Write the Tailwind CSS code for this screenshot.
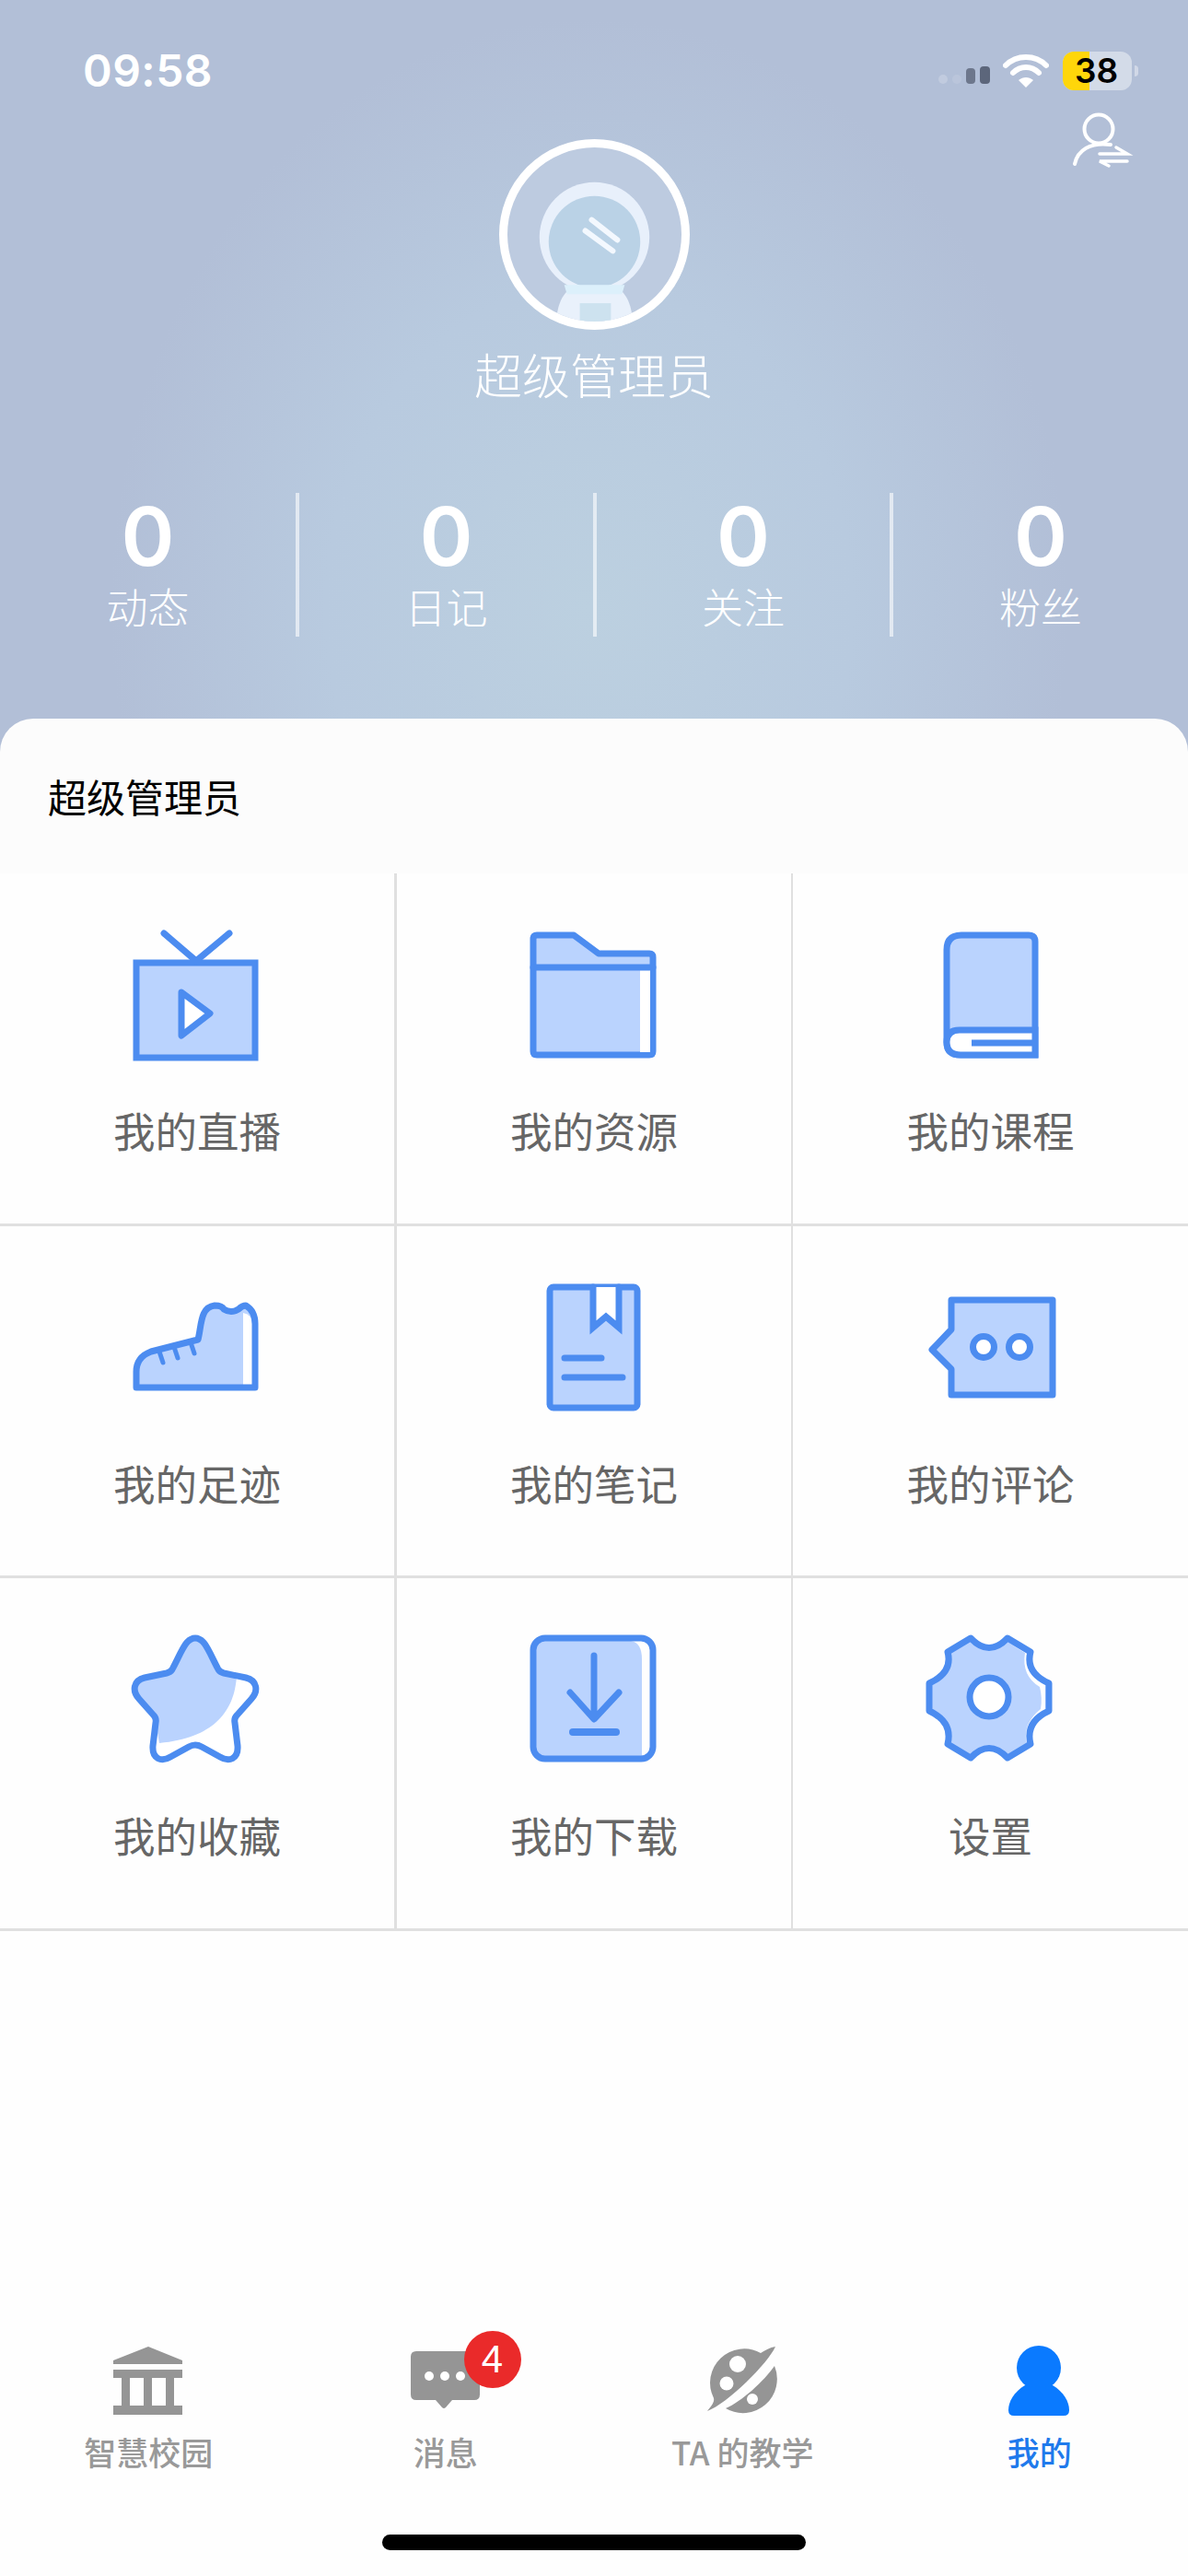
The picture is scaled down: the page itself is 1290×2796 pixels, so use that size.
<!DOCTYPE html>
<html lang="zh-CN">
<head>
<meta charset="utf-8">
<script src="https://cdn.jsdelivr.net/npm/@tailwindcss/browser@4"></script>
</head>
<body class="bg-[#fefefe]">
<div class="relative w-[1290px] h-[2796px] flex flex-col overflow-hidden bg-[#fefefe] font-['Noto_Sans_CJK_SC','Noto_Sans',sans-serif]">

  <!-- Header -->
  <header class="relative h-[816px] shrink-0 flex flex-col items-center text-white bg-[radial-gradient(ellipse_520px_640px_at_640px_660px,#bcd0e0_0%,#b8cadf_55%,#b2bfd7_100%)]">
    <!-- Status bar -->
    <div class="w-full h-[42px] mt-[56px] flex items-center justify-between pl-[90px] pr-[54px]">
      <span class="font-['Inter','Liberation_Sans',sans-serif] font-semibold text-[48px] leading-none tracking-[0.5px]">09:58</span>
      <div class="flex items-center">
        <div class="flex items-end gap-[5px] h-[20px] mt-[8px]">
          <span class="w-[10px] h-[10px] rounded-full bg-white/20"></span>
          <span class="w-[10px] h-[10px] rounded-full bg-white/10"></span>
          <span class="w-[10px] h-[17px] rounded-[4px] bg-[#6d778c]"></span>
          <span class="w-[11px] h-[19px] rounded-[4px] bg-[#5c667b]"></span>
        </div>
        <svg class="ml-[14px] mr-[15px]" width="50" height="38" viewBox="0 0 50 38" fill="none" stroke="#fff" stroke-linecap="round">
          <path d="M3 13 C15 1 35 1 47 13" stroke-width="6"/>
          <path d="M11 21 C19 13 31 13 39 21" stroke-width="6"/>
          <path d="M25 37 L17 29 C22 25 28 25 33 29 Z" fill="#fff" stroke="none"/>
        </svg>
        <div class="relative w-[75px] h-[42px] rounded-[12px] bg-[#d3dbe8] flex">
          <span class="w-[29px] h-full rounded-l-[12px] bg-[#ffd60a]"></span>
          <span class="absolute inset-0 flex items-center justify-center font-['Inter','Liberation_Sans',sans-serif] font-semibold text-[37px] leading-[42px] text-black pr-[2px]">38</span>
        </div>
        <span class="w-[4px] h-[12px] ml-[3px] rounded-r-full bg-white/40"></span>
      </div>
    </div>

    <!-- switch user -->
    <svg class="absolute left-[1160px] top-[118px]" width="72" height="66" viewBox="1160 118 72 66" fill="none" stroke="#fff" stroke-width="4" stroke-linecap="round">
      <circle cx="1193" cy="140" r="15.5"/>
      <path d="M1167 178 C1170 163 1184 154 1206 157"/>
      <path d="M1194 167 H1224 L1212 160" stroke-width="3.5"/>
      <path d="M1224 175 H1194 L1204 180" stroke-width="3.5"/>
    </svg>

    <!-- Avatar -->
    <div class="mt-[53px] w-[207px] h-[207px] rounded-full border-[9px] border-white overflow-hidden bg-[#bdcbe0] shrink-0">
      <svg width="189" height="189" viewBox="550 160 190 190">
        <path d="M603 352 C604 335 608 325 614 318 H676 C682 325 686 335 687 352 Z" fill="#e9f1fb"/>
        <circle cx="645" cy="258" r="60" fill="#e8f0fb"/>
        <circle cx="645" cy="263" r="50" fill="#bad2e6"/>
        <path d="M612 310 H678 L675 320 H615 Z" fill="#dcf0fb"/>
        <rect x="629" y="330" width="34" height="22" fill="#cde2ef"/>
        <path d="M642 239 L670 261 M635 251 L665 273" stroke="#f3f8fe" stroke-width="6" stroke-linecap="round"/>
      </svg>
    </div>

    <div class="mt-[18px] h-[60px] leading-[60px] text-[52px] font-light">超级管理员</div>

    <!-- Stats -->
    <div class="mt-[99px] w-full grid grid-cols-[325px_323px_322px_1fr] h-[156px]">
      <div class="flex flex-col items-center pt-[7px] border-r-[4px] border-white/60">
        <span class="font-['Inter','Liberation_Sans',sans-serif] font-semibold text-[88px] leading-[80px]">0</span>
        <span class="mt-[11px] text-[45px] leading-[50px] font-light">动态</span>
      </div>
      <div class="flex flex-col items-center pt-[7px] border-r-[4px] border-white/60">
        <span class="font-['Inter','Liberation_Sans',sans-serif] font-semibold text-[88px] leading-[80px]">0</span>
        <span class="mt-[11px] text-[45px] leading-[50px] font-light">日记</span>
      </div>
      <div class="flex flex-col items-center pt-[7px] border-r-[4px] border-white/60">
        <span class="font-['Inter','Liberation_Sans',sans-serif] font-semibold text-[88px] leading-[80px]">0</span>
        <span class="mt-[11px] text-[45px] leading-[50px] font-light">关注</span>
      </div>
      <div class="flex flex-col items-center pt-[7px]">
        <span class="font-['Inter','Liberation_Sans',sans-serif] font-semibold text-[88px] leading-[80px]">0</span>
        <span class="mt-[11px] text-[45px] leading-[50px] font-light">粉丝</span>
      </div>
    </div>
  </header>

  <!-- Sheet title -->
  <section class="relative -mt-[36px] h-[168px] shrink-0 rounded-t-[36px] bg-[#fcfcfc] flex items-center pl-[52px] pb-[2px] text-[42px] text-black">超级管理员</section>

  <!-- Grid -->
  <section class="grid grid-cols-[431px_430px_1fr] auto-rows-[382.5px] text-[#666] text-[45.5px]">
    <!-- 直播 -->
    <div class="flex flex-col items-center pt-[58px] border-r-[3px] border-b-[3px] border-[#e0e0e0]">
      <svg width="150" height="150" viewBox="0 0 150 150" fill="none" stroke="#4c8cf0" stroke-width="7" stroke-linecap="round" stroke-linejoin="round">
        <rect x="9" y="39" width="129" height="103" fill="#bad3fe" stroke-linejoin="miter"/>
        <path d="M39 7 L74 37 L110 7"/>
        <path d="M58 71 L89 94 L58 118 Z" fill="#fff"/>
      </svg>
      <span class="mt-[40px] leading-[60px]">我的直播</span>
    </div>
    <!-- 资源 -->
    <div class="flex flex-col items-center pt-[58px] border-r-2 border-b-[3px] border-[#e0e0e0]">
      <svg width="150" height="150" viewBox="0 0 150 150" fill="none" stroke="#4c8cf0" stroke-width="7" stroke-linecap="round" stroke-linejoin="round">
        <path d="M9 13 Q9 9 13 9 H53 L80 29 H135 Q139 29 139 33 V135 Q139 139 135 139 H13 Q9 139 9 135 Z" fill="#bad3fe"/>
        <rect x="125" y="46" width="11" height="90" fill="#fff" stroke="none"/>
        <path d="M9 44 H139"/>
      </svg>
      <span class="mt-[40px] leading-[60px]">我的资源</span>
    </div>
    <!-- 课程 -->
    <div class="flex flex-col items-center pt-[58px] border-b-[3px] border-[#e0e0e0]">
      <svg width="150" height="150" viewBox="0 0 150 150" fill="none" stroke="#4c8cf0" stroke-width="7" stroke-linecap="round" stroke-linejoin="miter">
        <path d="M27 25 Q27 9 43 9 H116 Q123 9 123 16 V139 H42 Q27 139 27 125 Z" fill="#bad3fe"/>
        <path d="M123 112 H41 Q27 112 27 125 Q27 139 42 139 H123 Z" fill="#fff"/>
        <path d="M54 126 H123" stroke-linecap="butt"/>
      </svg>
      <span class="mt-[40px] leading-[60px]">我的课程</span>
    </div>

    <!-- 足迹 -->
    <div class="flex flex-col items-center pt-[58px] border-r-[3px] border-b-[3px] border-[#e0e0e0]">
      <svg width="150" height="150" viewBox="0 0 150 150" fill="none" stroke="#4c8cf0" stroke-width="7" stroke-linecap="round" stroke-linejoin="round">
        <path d="M9 117 V100 Q9 84 25 78 L76 65 C80 50 78 30 94 28 Q102 28 104 32 Q112 37 120 32 Q124 28 128 28 Q138 34 138 48 V117 Z" fill="#bad3fe" stroke="none"/>
        <path d="M125 36 Q135 38 135 48 V114 H125 Z" fill="#fff" stroke="none"/>
        <path d="M9 117 V100 Q9 84 25 78 L76 65 C80 50 78 30 94 28 Q102 28 104 32 Q112 37 120 32 Q124 28 128 28 Q138 34 138 48 V117 Z"/>
        <path d="M34 78 L38 90 M50 73 L54 85 M68 68 L72 80" stroke-width="5"/>
      </svg>
      <span class="mt-[40px] leading-[60px]">我的足迹</span>
    </div>
    <!-- 笔记 -->
    <div class="flex flex-col items-center pt-[58px] border-r-2 border-b-[3px] border-[#e0e0e0]">
      <svg width="150" height="150" viewBox="0 0 150 150" fill="none" stroke="#4c8cf0" stroke-width="7" stroke-linecap="round" stroke-linejoin="round">
        <rect x="27" y="8" width="95" height="131" rx="4" fill="#bad3fe"/>
        <path d="M74 8 V52 L88 40 L102 52 V8" fill="#fff" stroke-linejoin="miter"/>
        <path d="M43 85 H83 M43 106 H106"/>
      </svg>
      <span class="mt-[40px] leading-[60px]">我的笔记</span>
    </div>
    <!-- 评论 -->
    <div class="flex flex-col items-center pt-[58px] border-b-[3px] border-[#e0e0e0]">
      <svg width="150" height="150" viewBox="0 0 150 150" fill="none" stroke="#4c8cf0" stroke-width="7" stroke-linecap="round" stroke-linejoin="round">
        <path d="M32 22 H142 V125 H32 V97 L11 76 L32 54 Z" fill="#bad3fe"/>
        <circle cx="67" cy="73" r="11.5" fill="#fff"/>
        <circle cx="106" cy="73" r="11.5" fill="#fff"/>
      </svg>
      <span class="mt-[40px] leading-[60px]">我的评论</span>
    </div>

    <!-- 收藏 -->
    <div class="flex flex-col items-center pt-[58px] border-r-[3px] border-b-[3px] border-[#e0e0e0]">
      <svg width="150" height="150" viewBox="0 0 150 150" fill="none" stroke="#4c8cf0" stroke-width="7" stroke-linecap="round" stroke-linejoin="round">
        <path d="M73 7 C83 7 87 20 98 41 Q100 44 104 45 L128 50 C140 53 142 64 134 73 L118 91 Q115 94 116 99 L119 124 C120 138 110 142 100 136 L80 125 Q73 121 66 125 L46 136 C36 142 26 138 27 124 L30 99 Q31 94 28 91 L12 73 C4 64 6 53 18 50 L42 45 Q46 44 48 41 C59 20 63 7 73 7 Z" fill="#fff" stroke="none"/>
        <path d="M73 9 C83 9 87 20 98 42 L118 48 C116 80 100 115 34 121 L30 99 Q31 94 28 91 L12 73 C4 64 6 53 18 50 L42 45 Q46 44 48 41 C59 20 63 9 73 9 Z" fill="#bad3fe" stroke="none"/>
        <path d="M73 7 C83 7 87 20 98 41 Q100 44 104 45 L128 50 C140 53 142 64 134 73 L118 91 Q115 94 116 99 L119 124 C120 138 110 142 100 136 L80 125 Q73 121 66 125 L46 136 C36 142 26 138 27 124 L30 99 Q31 94 28 91 L12 73 C4 64 6 53 18 50 L42 45 Q46 44 48 41 C59 20 63 7 73 7 Z"/>
      </svg>
      <span class="mt-[40px] leading-[60px]">我的收藏</span>
    </div>
    <!-- 下载 -->
    <div class="flex flex-col items-center pt-[58px] border-r-2 border-b-[3px] border-[#e0e0e0]">
      <svg width="150" height="150" viewBox="0 0 150 150" fill="none" stroke="#4c8cf0" stroke-width="7" stroke-linecap="round" stroke-linejoin="round">
        <path d="M12 22 Q12 10 22 10 H115 Q127 12 127 30 V135 H22 Q12 135 12 123 Z" fill="#bad3fe" stroke="none"/>
        <rect x="9" y="7" width="130" height="131" rx="13"/>
        <path d="M75 26 V94 M49 66 L75 95 L102 66"/>
        <path d="M52 109 H99" stroke-width="8"/>
      </svg>
      <span class="mt-[40px] leading-[60px]">我的下载</span>
    </div>
    <!-- 设置 -->
    <div class="flex flex-col items-center pt-[58px] border-b-[3px] border-[#e0e0e0]">
      <svg width="150" height="150" viewBox="0 0 150 150" fill="none" stroke="#4c8cf0" stroke-width="7" stroke-linecap="round" stroke-linejoin="round">
        <path d="M53 7 Q73 28 93 7 L118 22 Q112 44 138 56 V86 Q112 98 118 122 L93 137 Q73 116 53 137 L28 122 Q34 98 8 86 V56 Q34 44 28 22 Z" fill="#bad3fe" stroke="none"/>
        <path d="M97 14 L112 23 Q108 48 128 60 Q131 72 129 84 Q111 98 113 118 L114 120 L134 86 V58 Q110 46 115 24 Z" fill="#fff" stroke="none"/>
        <path d="M53 7 Q73 28 93 7 L118 22 Q112 44 138 56 V86 Q112 98 118 122 L93 137 Q73 116 53 137 L28 122 Q34 98 8 86 V56 Q34 44 28 22 Z"/>
        <circle cx="73" cy="71" r="21" fill="#fff"/>
      </svg>
      <span class="mt-[40px] leading-[60px]">设置</span>
    </div>
  </section>

  <!-- Tab bar -->
  <nav class="mt-auto grid grid-cols-4 text-[35px] font-medium leading-[50px] text-[#999] pb-[110px]">
    <div class="flex flex-col items-center">
      <svg width="90" height="90" viewBox="117 2540 90 90" fill="#959595">
        <path d="M162 2548 L199 2563 V2567 H124 V2563 Z"/>
        <rect x="124" y="2573" width="75" height="9"/>
        <rect x="133" y="2582" width="9" height="30"/>
        <rect x="157" y="2582" width="9" height="30"/>
        <rect x="181" y="2582" width="9" height="30"/>
        <rect x="124" y="2612" width="75" height="10"/>
      </svg>
      <span class="mt-[7px]">智慧校园</span>
    </div>
    <div class="relative flex flex-col items-center">
      <svg width="90" height="90" viewBox="439 2540 90 90" fill="#959595">
        <path d="M452 2553 H515 Q521 2553 521 2559 V2600 Q521 2606 515 2606 H491 L484 2614 Q482 2616 480 2614 L473 2606 H452 Q446 2606 446 2600 V2559 Q446 2553 452 2553 Z"/>
        <circle cx="466" cy="2580" r="5" fill="#fff"/>
        <circle cx="483" cy="2580" r="5" fill="#fff"/>
        <circle cx="500" cy="2580" r="5" fill="#fff"/>
      </svg>
      <span class="absolute left-[181px] top-[-9px] w-[62px] h-[62px] rounded-full bg-[#ea2a2a] text-white flex items-center justify-center text-[42px] font-normal leading-none font-['Liberation_Sans',sans-serif]">4</span>
      <span class="mt-[7px]">消息</span>
    </div>
    <div class="flex flex-col items-center">
      <svg width="90" height="90" viewBox="761 2540 90 90" fill="#959595">
        <path d="M842 2548 C834 2566 790 2610 768 2618 C773 2612 776 2608 775 2604 A37 37 0 0 1 826 2555 C831 2552 836 2549 842 2548 Z"/>
        <path d="M841 2569 A37 37 0 0 1 788 2615 C805 2608 830 2585 841 2569 Z"/>
        <circle cx="801" cy="2567" r="9" fill="#fff"/>
        <circle cx="789" cy="2588" r="7.5" fill="#fff"/>
        <circle cx="817" cy="2605" r="6" fill="#fff"/>
      </svg>
      <span class="mt-[7px]">TA 的教学</span>
    </div>
    <div class="flex flex-col items-center text-[#0a7aff]">
      <svg width="90" height="90" viewBox="1083 2540 90 90" fill="#0a7aff">
        <circle cx="1127" cy="2571" r="24"/>
        <path d="M1112 2590 C1100 2597 1094 2608 1094 2617 Q1094 2623 1100 2623 H1154 Q1160 2623 1160 2617 C1160 2608 1154 2597 1142 2590 Z"/>
      </svg>
      <span class="mt-[7px] text-[#1f7aec]">我的</span>
    </div>
  </nav>

  <!-- Home indicator -->
  <div class="absolute left-[415px] top-[2751px] w-[460px] h-[17px] rounded-full bg-black"></div>
</div>
</body>
</html>
